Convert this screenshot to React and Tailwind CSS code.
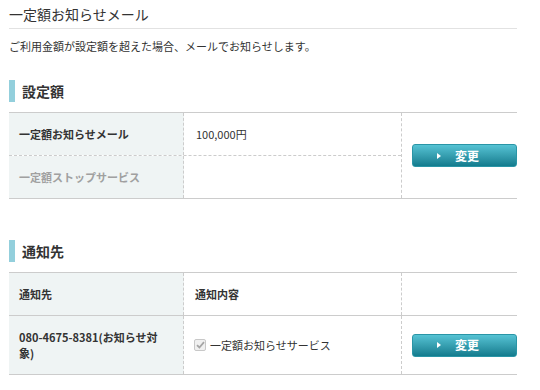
export default function App() {
  const font = { fontFamily: '"Noto Sans CJK JP", "Noto Sans", sans-serif' };

  const ChangeButton = () => (
    <div className="flex items-center w-[105px] h-[23px] rounded-[3px] border border-[#2a95a6] bg-gradient-to-b from-[#55c3d4] to-[#127c8e] text-white">
      <span className="ml-[24px] w-0 h-0 border-y-[3px] border-y-transparent border-l-[4px] border-l-white" />
      <span className="ml-[14px] text-[12px] font-bold leading-none">変更</span>
    </div>
  );

  return (
    <div className="w-[540px] h-[390px] bg-white text-[#333] px-[9px]" style={font}>
      <div className="w-[508px]">
        <div className="pt-[4px] pb-[4px] text-[14px] leading-[20px] border-b border-[#e2e2e2]">
          一定額お知らせメール
        </div>
        <div className="mt-[9px] text-[11px] leading-[16px]">
          ご利用金額が設定額を超えた場合、メールでお知らせします。
        </div>

        <div className="mt-[26px] flex items-center h-[22px]">
          <span className="w-[6px] h-[22px] bg-[#93cfdc]" />
          <span className="ml-[7px] text-[14px] font-bold leading-[22px]">設定額</span>
        </div>

        <div className="mt-[10px] flex border-t border-b border-[#cccccc]">
          <div className="w-[392px]">
            <div className="flex h-[43px] border-b border-dashed border-[#cccccc]">
              <div className="w-[175px] bg-[#eff4f4] border-r border-dashed border-[#cccccc] pl-[10px] flex items-center text-[11px] font-bold">
                一定額お知らせメール
              </div>
              <div className="flex-1 pl-[12px] flex items-center text-[11px]">100,000円</div>
            </div>
            <div className="flex h-[42px]">
              <div className="w-[175px] bg-[#eff4f4] border-r border-dashed border-[#cccccc] pl-[10px] flex items-center text-[11px] font-bold text-[#a0a0a0]">
                一定額ストップサービス
              </div>
              <div className="flex-1" />
            </div>
          </div>
          <div className="flex-1 border-l border-dashed border-[#cccccc] flex items-center justify-end">
            <ChangeButton />
          </div>
        </div>

        <div className="mt-[41px] flex items-center h-[22px]">
          <span className="w-[6px] h-[22px] bg-[#93cfdc]" />
          <span className="ml-[7px] text-[14px] font-bold leading-[22px]">通知先</span>
        </div>

        <div className="mt-[10px] border-t border-[#cccccc]">
          <div className="flex h-[43px] border-b border-[#cccccc]">
            <div className="w-[175px] bg-[#eff4f4] border-r border-dashed border-[#cccccc] pl-[10px] flex items-center text-[11px] font-bold">
              通知先
            </div>
            <div className="w-[217px] pl-[11px] flex items-center text-[11px] font-bold">通知内容</div>
            <div className="flex-1 border-l border-dashed border-[#cccccc]" />
          </div>
          <div className="flex h-[59px] border-b border-[#cccccc]">
            <div className="w-[175px] bg-[#eff4f4] border-r border-dashed border-[#cccccc] pl-[10px] pr-[16px] flex items-center text-[11px] font-bold leading-[16px]">
              080-4675-8381(お知らせ対象)
            </div>
            <div className="w-[217px] pl-[10px] flex items-center text-[11px]">
              <span className="w-[12px] h-[12px] rounded-[2px] border border-[#c8c8c8] bg-[#f0f0f0] flex items-center justify-center">
                <svg width="9" height="8" viewBox="0 0 9 8">
                  <path d="M1 4.2 L3.4 6.5 L8 1.2" fill="none" stroke="#a5a5a5" strokeWidth="1.8" />
                </svg>
              </span>
              <span className="ml-[4px]">一定額お知らせサービス</span>
            </div>
            <div className="flex-1 border-l border-dashed border-[#cccccc] flex items-center justify-end">
              <ChangeButton />
            </div>
          </div>
        </div>
      </div>
    </div>
  );
}
